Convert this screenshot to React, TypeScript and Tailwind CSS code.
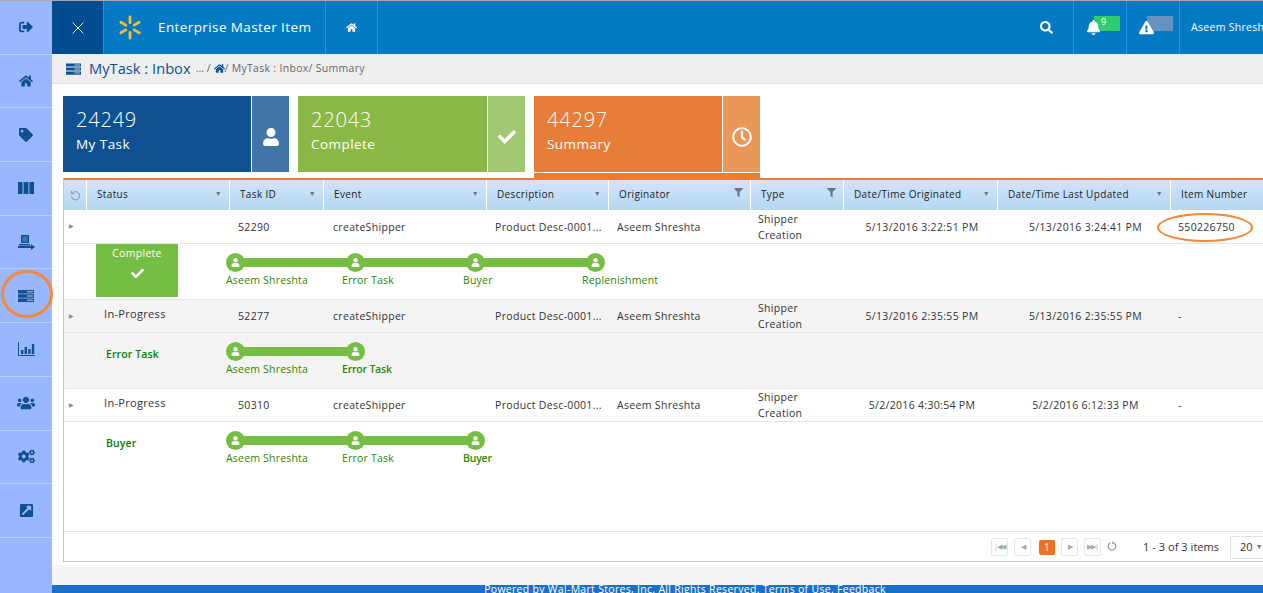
import React from 'react';
import {
  FaBell,
  FaCheck,
  FaCogs,
  FaExclamationTriangle,
  FaExternalLinkSquareAlt,
  FaFilter,
  FaHome,
  FaRegClock,
  FaSearch,
  FaSignOutAlt,
  FaTag,
  FaUser,
  FaUsers,
} from 'react-icons/fa';

const GRID = 'grid grid-cols-[22px_143px_94px_163px_122px_142px_93px_154px_173px_94px]';

const ServerIcon: React.FC<{ className?: string }> = ({ className }) => (
  <svg viewBox="0 0 16 12" className={className} fill="currentColor">
    <path d="M0 0h16v3.4H0zM0 4.3h16v3.4H0zM0 8.6h16V12H0z" />
    <path d="M9 1.2h6v1H9zM9 5.5h6v1H9zM9 9.8h6v1H9z" fill="#ffffff" opacity="0.7" />
  </svg>
);

const ColumnsIcon = () => (
  <svg viewBox="0 0 16 12" className="w-[16px] h-[12px]" fill="currentColor">
    <path d="M0 0h4.6v12H0zM5.6 0h4.8v12H5.6zM11.4 0H16v12h-4.6z" />
  </svg>
);

const ImportIcon = () => (
  <svg viewBox="0 0 17 15" className="w-[17px] h-[15px]" fill="currentColor">
    <path d="M3 0h8v8H3zM1 9h11v1.4H1z" />
    <path d="M0 11h13V9l4 3-4 3v-2H0z" />
    <path d="M4.5 1.2h5v5.6h-5z" fill="#99b7ff" opacity="0.35" />
  </svg>
);

const BarsIcon = () => (
  <svg viewBox="0 0 17 14" className="w-[17px] h-[14px]" fill="currentColor">
    <path d="M0 0h1v13h16v1H0z" />
    <path d="M3 8h2.4v4H3zM6.6 5h2.4v7H6.6zM10.2 7h2.4v5h-2.4zM13.8 2h2.4v10h-2.4z" />
  </svg>
);

const Spark = () => (
  <svg viewBox="0 0 24 24" className="w-[24px] h-[25px]" fill="#fdbb30">
    {[0, 60, 120, 180, 240, 300].map((a) => (
      <rect key={a} x="10.6" y="0" width="2.8" height="8.6" rx="1.4" transform={`rotate(${a} 12 12)`} />
    ))}
  </svg>
);

const sideIcons = [
  <FaSignOutAlt className="text-[14px]" />,
  <FaHome className="text-[14px]" />,
  <FaTag className="text-[14px]" />,
  <ColumnsIcon />,
  <ImportIcon />,
  <ServerIcon className="w-[16px] h-[12px]" />,
  <BarsIcon />,
  <FaUsers className="text-[18px]" />,
  <FaCogs className="text-[17px]" />,
  <FaExternalLinkSquareAlt className="text-[15px]" />,
];

const Sidebar = () => (
  <div className="w-[52px] shrink-0 bg-[#99b7ff] text-[#0f4f92]">
    {sideIcons.map((icon, i) => (
      <div key={i} className="h-[53.7px] flex items-center justify-center border-b border-[#b9cdfb]">
        {icon}
      </div>
    ))}
  </div>
);

const TopBar = () => (
  <div className="h-[53px] shrink-0 flex bg-[#0479c4] text-white">
    <div className="w-[51px] bg-[#004c91] flex items-center justify-center text-[24px] font-light leading-none">
      <svg viewBox="0 0 12 12" className="w-[12px] h-[12px]" stroke="#dbe7f3" strokeWidth="1">
        <path d="M0.5 0.5l11 11M11.5 0.5l-11 11" />
      </svg>
    </div>
    <div className="w-[222px] border-l border-[#2a8fe8] flex items-center pl-[14px]">
      <Spark />
      <span className="ml-[16px] text-[13.5px] tracking-[0.4px]">Enterprise Master Item</span>
    </div>
    <div className="w-[52px] border-l border-[#2a8fe8] flex items-center justify-center">
      <FaHome className="text-[11px]" />
    </div>
    <div className="border-l border-[#2a8fe8] flex-1" />
    <div className="w-[54px] flex items-center justify-center">
      <FaSearch className="text-[13px]" />
    </div>
    <div className="w-[53px] border-l border-[#2a8fe8] relative flex items-center pl-[12px]">
      <FaBell className="text-[15px] relative z-10" />
      <span className="absolute left-[20px] top-[15px] w-[26px] h-[15px] bg-[#2ecc71] text-[9px] leading-[11px] pl-[7px]">9</span>
    </div>
    <div className="w-[53px] border-l border-[#2a8fe8] relative flex items-center pl-[12px]">
      <FaExclamationTriangle className="text-[15px] relative z-10" />
      <span className="absolute left-[20px] top-[15px] w-[26px] h-[15px] bg-[#6791bf]" />
    </div>
    <div className="w-[84px] border-l border-[#2a8fe8] flex items-center pl-[11px] overflow-hidden whitespace-nowrap text-[10.5px] tracking-[0.3px]">
      Aseem Shreshta
    </div>
  </div>
);

const Breadcrumb = () => (
  <div className="h-[30px] shrink-0 flex items-center bg-[#eeeeee] border-b border-[#e2e2e2] pl-[14px] text-[#666666]">
    <ServerIcon className="w-[15px] h-[12px] text-[#0f4f92]" />
    <span className="ml-[8px] text-[14.7px] text-[#0f5190]">MyTask : Inbox</span>
    <span className="ml-[5px] text-[10.5px]">... /</span>
    <FaHome className="ml-[3px] text-[11px] text-[#0f4f92]" />
    <span className="text-[10.5px] tracking-[0.3px] whitespace-pre">/ MyTask : Inbox/ Summary</span>
  </div>
);

const Tile: React.FC<{
  value: string;
  label: string;
  width: string;
  bg: string;
  side: string;
  icon: React.ReactNode;
  active?: boolean;
}> = ({ value, label, width, bg, side, icon, active }) => (
  <div className={active ? `${width} flex flex-col pb-px border-b-[5px] border-[#e67e3a]` : `${width} flex flex-col`}>
    <div className="h-[76px] flex text-white">
      <div className={`flex-1 ${bg} pl-[13px] pt-[10px]`}>
        <div className="text-[20px] font-light leading-[28px] tracking-[0.8px]">{value}</div>
        <div className="text-[13.5px] leading-[20px] tracking-[0.45px]">{label}</div>
      </div>
      <div className={`w-[37px] ml-[1px] ${side} flex items-center justify-center pt-[5px]`}>{icon}</div>
    </div>
  </div>
);

const Tiles = () => (
  <div className="h-[82px] shrink-0 flex gap-[9px] pl-[11px] pt-[12px] box-content pb-0 bg-white">
    <Tile
      value="24249"
      label="My Task"
      width="w-[226px]"
      bg="bg-[#0f5190]"
      side="bg-[#4175a7]"
      icon={<FaUser className="text-[18px]" />}
    />
    <Tile
      value="22043"
      label="Complete"
      width="w-[227px]"
      bg="bg-[#8ab845]"
      side="bg-[#a1c870]"
      icon={<FaCheck className="text-[18px]" />}
    />
    <Tile
      value="44297"
      label="Summary"
      width="w-[226px]"
      bg="bg-[#e67e3a]"
      side="bg-[#ea9759]"
      icon={<FaRegClock className="text-[20px]" />}
      active
    />
  </div>
);

const headers = [
  { name: 'Status', mark: 'sort' },
  { name: 'Task ID', mark: 'sort' },
  { name: 'Event', mark: 'sort' },
  { name: 'Description', mark: 'sort' },
  { name: 'Originator', mark: 'filter' },
  { name: 'Type', mark: 'filter' },
  { name: 'Date/Time Originated', mark: 'sort' },
  { name: 'Date/Time Last Updated', mark: 'sort' },
  { name: 'Item Number', mark: '' },
];

const HeaderRow = () => (
  <div className={`${GRID} h-[30px] bg-gradient-to-b from-[#d4e3fd] to-[#b4d7f0] text-[10px] tracking-[0.35px] text-[#222222]`}>
    <div className="flex items-center justify-center text-[#7f8b99]">
      <svg viewBox="0 0 12 12" className="w-[11px] h-[11px]" fill="none" stroke="currentColor" strokeWidth="1">
        <path d="M2.5 3.5A4.5 4.5 0 1 1 1.6 7M1.5 1v3h3" />
      </svg>
    </div>
    {headers.map((h) => (
      <div key={h.name} className="border-l border-white flex items-center justify-between pl-[10px] pr-[7px] pb-[2px] whitespace-nowrap">
        <span>{h.name}</span>
        {h.mark === 'sort' && <span className="text-[7px] text-[#6f7780]">▼</span>}
        {h.mark === 'filter' && <FaFilter className="text-[9px] text-[#6f7780] -mt-[3px]" />}
      </div>
    ))}
  </div>
);

const Row: React.FC<{
  status?: string;
  id: string;
  origin: string;
  updated: string;
  item: string;
  gray?: boolean;
  tall?: boolean;
}> = ({ status, id, origin, updated, item, gray, tall }) => (
  <div className={`${GRID} ${tall ? 'h-[34px]' : 'h-[33px]'} items-center border-b border-[#e4e4e4] text-[10.5px] tracking-[0.32px] text-[#333333] ${gray ? 'bg-[#f4f4f4]' : 'bg-white'}`}>
    <div className="pl-[5px] text-[6px] text-[#8a8a8a]">▶</div>
    <div className="pl-[18px] -mt-[4px] text-[11px]">{status}</div>
    <div className="pl-[9px] mt-[2px]">{id}</div>
    <div className="pl-[10px] mt-[2px]">createShipper</div>
    <div className="pl-[9px] mt-[2px] whitespace-nowrap">Product Desc-0001...</div>
    <div className="pl-[9px] mt-[2px]">Aseem Shreshta</div>
    <div className="pl-[8px] leading-[16px]">Shipper<br />Creation</div>
    <div className="text-center pl-[4px] mt-[2px]">{origin}</div>
    <div className="text-center pl-[4px] mt-[2px]">{updated}</div>
    <div className="pl-[8px] mt-[2px]">{item}</div>
  </div>
);

const Tracker: React.FC<{ steps: string[]; current?: boolean }> = ({ steps, current }) => (
  <div className="pt-[9px]">
    <div className="flex items-center">
      {steps.map((s, i) => (
        <React.Fragment key={s}>
          <div className="w-[19px] h-[19px] rounded-full bg-[#76bd43] flex items-center justify-center text-white shrink-0 relative z-10">
            <FaUser className="text-[9px]" />
          </div>
          {i < steps.length - 1 && <div className="w-[103px] h-[9px] -mx-px bg-[#76bd43]" />}
        </React.Fragment>
      ))}
    </div>
    <div className="flex text-[10.5px] tracking-[0.2px] text-[#2a8a00] leading-[16px] whitespace-nowrap">
      <span className="w-[116px]">{steps[0]}</span>
      {steps[1] && <span className={current && steps.length === 2 ? 'w-[121px] font-semibold tracking-[-0.2px]' : 'w-[121px]'}>{steps[1]}</span>}
      {steps[2] && <span className={current ? 'w-[119px] font-semibold tracking-[-0.2px]' : 'w-[119px]'}>{steps[2]}</span>}
      {steps[3] && <span>{steps[3]}</span>}
    </div>
  </div>
);

const DetailRow: React.FC<{ gray?: boolean; grow?: boolean; children: React.ReactNode }> = ({ gray, grow, children }) => (
  <div className={`flex ${grow ? 'flex-1' : 'h-[56px]'} border-b border-[#e4e4e4] ${gray ? 'bg-[#f4f4f4]' : 'bg-white'}`}>
    {children}
  </div>
);

const StatusLabel: React.FC<{ text: string; steps: string[] }> = ({ text, steps }) => (
  <>
    <div className="w-[162px] shrink-0 pl-[42px] pt-[14px] text-[10.5px] font-semibold tracking-[0.1px] text-[#0a7d00]">{text}</div>
    <Tracker steps={steps} current />
  </>
);

const PagerButton: React.FC<{ children: React.ReactNode }> = ({ children }) => (
  <div className="w-[17px] h-[18px] border border-[#e6e6e6] rounded-[2px] flex items-center justify-center text-[#a8a8a8] text-[7px] tracking-[-1px]">
    {children}
  </div>
);

const Pager = () => (
  <div className="h-[29px] shrink-0 flex items-center pl-[927px] pt-[1px] text-[11px] tracking-[0.05px] text-[#333333] whitespace-nowrap">
    <PagerButton>|◀◀</PagerButton>
    <div className="ml-[6px]"><PagerButton>◀</PagerButton></div>
    <div className="ml-[8px] w-[16px] h-[15px] rounded-[2px] bg-[#f37021] text-white text-[10px] flex items-center justify-center">1</div>
    <div className="ml-[6px]"><PagerButton>▶</PagerButton></div>
    <div className="ml-[6px]"><PagerButton>▶▶|</PagerButton></div>
    <svg viewBox="0 0 12 12" className="ml-[6px] w-[10px] h-[10px] -mt-[2px]" fill="none" stroke="#9a9a9a" strokeWidth="1.6">
      <path d="M4 2.2A4.6 4.6 0 1 0 8 2.2M7 0.5v3" />
    </svg>
    <span className="ml-[26px] w-[87px]">1 - 3 of 3 items</span>
    <div className="w-[33px] h-[23px] border border-[#e2e2e2] border-r-0 flex items-center pl-[9px]">
      20<span className="ml-[3px] text-[7px] text-[#777777]">▼</span>
    </div>
  </div>
);

const Grid = () => (
  <div className="ml-[11px] h-[384px] shrink-0 flex flex-col border-l border-b border-[#c8c8c8] border-t-2 border-t-[#e67e3a]">
    <HeaderRow />
    <Row tall id="52290" origin="5/13/2016 3:22:51 PM" updated="5/13/2016 3:24:41 PM" item="550226750" />
    <DetailRow>
      <div className="w-[32px] shrink-0" />
      <div className="w-[82px] h-[53px] shrink-0 bg-[#76bd43] text-white text-center text-[10.5px] tracking-[0.3px] pt-[2px]">
        Complete
        <FaCheck className="text-[13px] mx-auto mt-[5px]" />
      </div>
      <div className="w-[48px] shrink-0" />
      <Tracker steps={['Aseem Shreshta', 'Error Task', 'Buyer', 'Replenishment']} />
    </DetailRow>
    <Row gray status="In-Progress" id="52277" origin="5/13/2016 2:35:55 PM" updated="5/13/2016 2:35:55 PM" item="-" />
    <DetailRow gray>
      <StatusLabel text="Error Task" steps={['Aseem Shreshta', 'Error Task']} />
    </DetailRow>
    <Row status="In-Progress" id="50310" origin="5/2/2016 4:30:54 PM" updated="5/2/2016 6:12:33 PM" item="-" />
    <DetailRow grow>
      <StatusLabel text="Buyer" steps={['Aseem Shreshta', 'Error Task', 'Buyer']} />
    </DetailRow>
    <Pager />
  </div>
);

export default function App() {
  return (
    <div className="relative h-[593px] overflow-hidden border-t border-[#a9a9a9] flex bg-white font-['Open_Sans',sans-serif]">
      <Sidebar />
      <div className="flex-1 min-w-0 flex flex-col">
        <TopBar />
        <Breadcrumb />
        <Tiles />
        <Grid />
        <div className="flex-1 bg-[#f5f5f5] mt-[3px]" />
        <div className="h-[8px] shrink-0 bg-[#1a6fc9] overflow-hidden text-center text-white text-[10.5px] leading-[8px] tracking-[0.3px] pl-[55px] whitespace-nowrap">
          Powered by Wal-Mart Stores, Inc. All Rights Reserved. Terms of Use. Feedback
        </div>
      </div>
      <div className="absolute left-[1px] top-[269px] w-[52px] h-[48px] rounded-[50%] border-[3px] border-[#f5873a]" />
      <div className="absolute left-[1157px] top-[212px] w-[96px] h-[29px] rounded-[50%] border-[2px] border-[#f5873a]" />
    </div>
  );
}
